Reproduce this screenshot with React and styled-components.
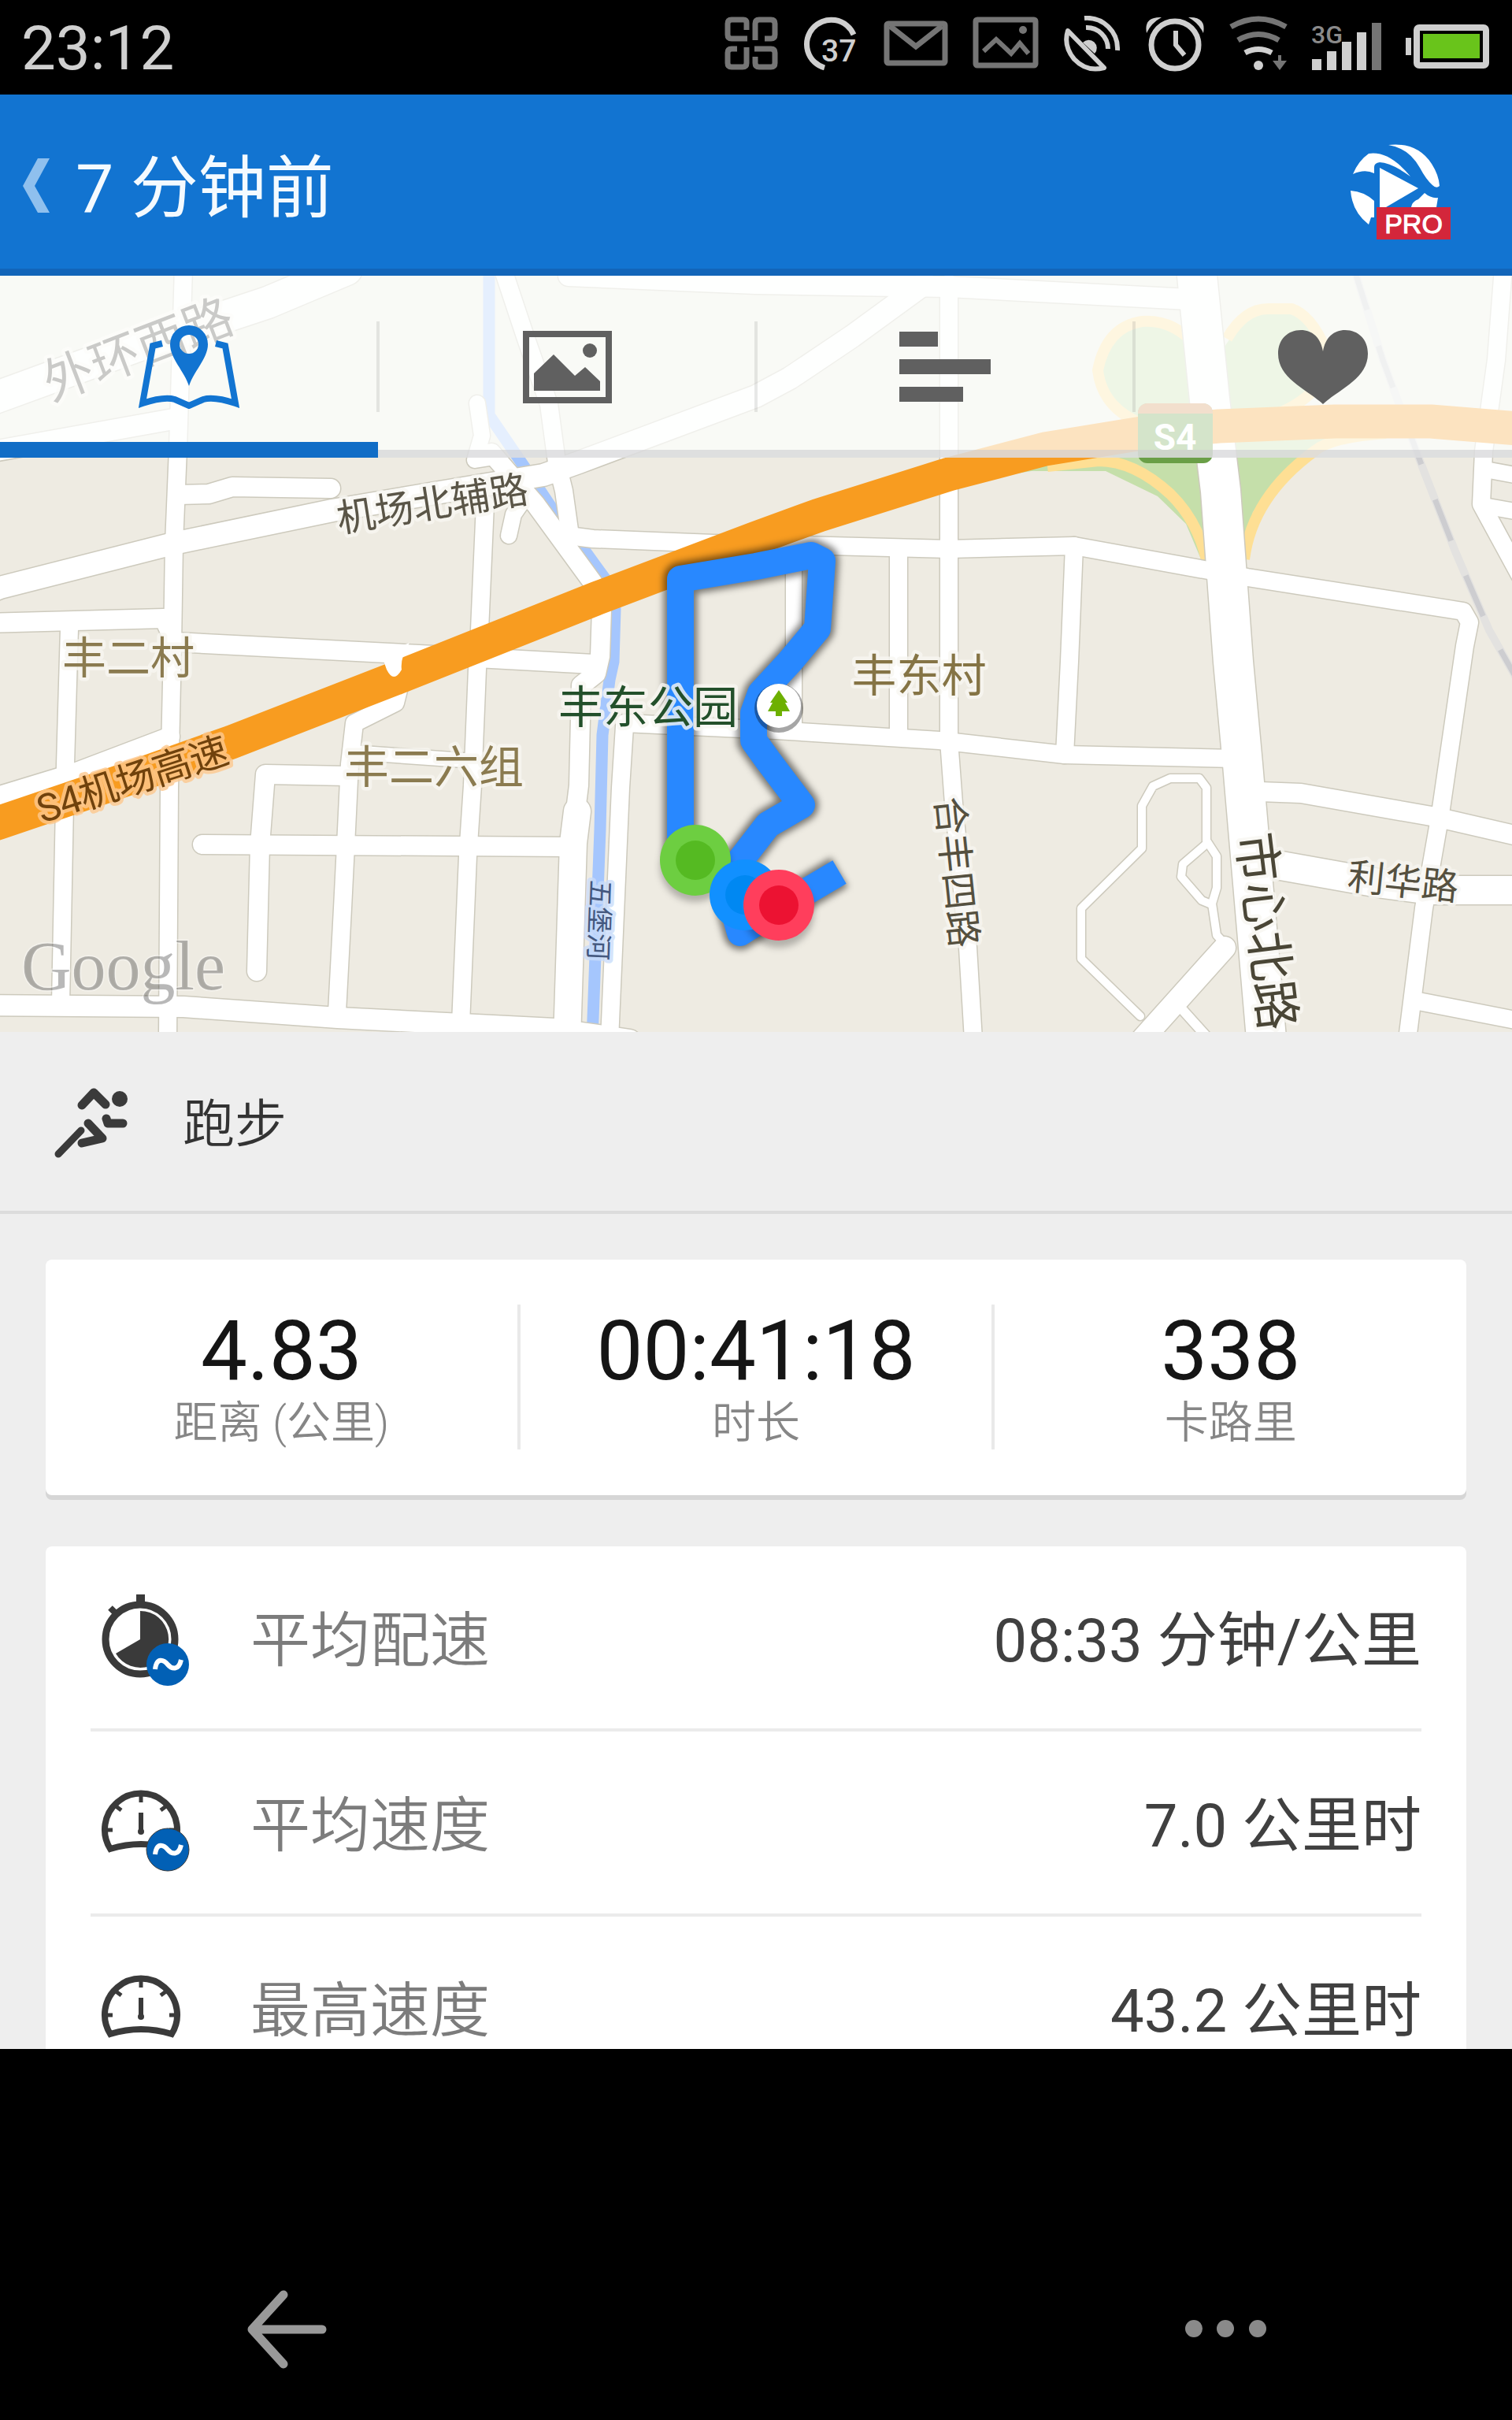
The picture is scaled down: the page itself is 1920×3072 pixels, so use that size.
import React, { useState } from 'react';
import styled, { createGlobalStyle } from 'styled-components';

const GlobalStyle = createGlobalStyle`
    * {
        box-sizing: border-box;
    }
    body {
        margin: 0;
        background: #000;
        font-family: Roboto, "Noto Sans CJK SC", sans-serif;
        color: #333;
    }
    button {
        border: none;
        background: none;
        padding: 0;
        font: inherit;
        color: inherit;
        cursor: pointer;
    }
    svg {
        display: block;
        flex: none;
    }
`

const Screen = styled.div`
    display: flex;
    flex-direction: column;
    height: 100vh;
`

const StatusBar = styled.div`
    display: flex;
    flex: none;
    align-items: center;
    justify-content: space-between;
    height: 120px;
    padding: 0 29px 8px 27px;
    background: #000;
    color: #d0d0d0;
`
const Clock = styled.time`
    font-size: 78px;
    line-height: 104px;
    padding-top: 12px;
`
const StatusIcons = styled.div`
    display: flex;
    align-items: center;
    gap: 31px;
`

const Header = styled.header`
    display: flex;
    flex: none;
    align-items: center;
    justify-content: space-between;
    height: 230px;
    padding: 10px 76px 0 28px;
    background: #1274d1;
    border-bottom: 9px solid #1265b9;
`
const BackLink = styled.button`
    display: flex;
    align-items: center;
    gap: 32px;
    color: #f4faff;
`
const Title = styled.h1`
    margin: 0;
    padding-top: 8px;
    font-size: 86px;
    font-weight: 400;
    line-height: 112px;
`

const Main = styled.main`
    flex: 1;
    min-height: 0;
    overflow: hidden;
    background: #eee;
`
const MapPanel = styled.section`
    position: relative;
    overflow: hidden;
    background: #eeebe2;
`
const MapSvg = styled.svg`
    width: 100%;
    height: auto;
`
const Tabs = styled.nav`
    position: absolute;
    top: 0;
    left: 0;
    right: 0;
    display: flex;
    height: 231px;
    background: rgba(254, 255, 254, 0.72);
`
const Tab = styled.button`
    display: flex;
    flex: 1;
    align-items: center;
    justify-content: center;
    color: ${props => props.$active ? '#1274d1' : '#606060'};
    box-shadow: inset 0 ${props => props.$active ? '-20px #116dc6' : '-10px rgba(200, 200, 204, 0.55)'};
`
const TabDivider = styled.span`
    width: 4px;
    height: 115px;
    margin: 58px -2px 0;
    background: rgba(120, 120, 120, 0.17);
`

const Activity = styled.section`
    display: flex;
    align-items: center;
    gap: 64px;
    height: 231px;
    padding: 0 66px;
    border-bottom: 4px solid #dcdcdc;
`
const ActivityName = styled.h2`
    margin: 0;
    padding-top: 8px;
    font-size: 66px;
    font-weight: 350;
    line-height: 88px;
`

const Cards = styled.div`
    display: flex;
    flex-direction: column;
    gap: 65px;
    padding: 58px;
`
const Card = styled.section`
    background: #fff;
    border-radius: 8px;
    box-shadow: 0 6px 0 #d6d6d6;
`
const Stats = styled(Card)`
    display: flex;
    padding: 57px 0 58px;
`
const Stat = styled.div`
    display: flex;
    flex: 1;
    flex-direction: column;
    align-items: center;
    height: 184px;
    border-right: 4px solid #e9e9e9;
    &:last-child{
        border-right: none;
    }
`
const StatValue = styled.strong`
    font-size: 105px;
    font-weight: 400;
    line-height: 120px;
    color: #151515;
`
const StatLabel = styled.span`
    font-size: 56px;
    font-weight: 350;
    line-height: 60px;
    color: #868686;
`

const Details = styled(Card)`
    padding: 0 57px;
`
const Row = styled.div`
    display: flex;
    align-items: center;
    gap: 76px;
    height: 235px;
    padding-left: 11px;
    border-bottom: 4px solid #ebebeb;
`
const RowText = styled.span`
    padding-top: 8px;
    font-size: 76px;
    line-height: 100px;
`
const RowLabel = styled(RowText)`
    flex: 1;
    font-weight: 350;
    color: #7c7c7c;
`
const RowValue = styled(RowText)`
    font-weight: 400;
    color: #404040;
`

const BottomNav = styled.nav`
    display: flex;
    flex: none;
    align-items: flex-end;
    justify-content: space-between;
    height: 471px;
    padding: 0 312px 65px;
    background: #000;
`

const roads = [
    { w: 40, d: 'M-20 510L180 437L340 384L440 342' },
    { w: 26, d: 'M-20 575L220 532' },
    { w: 22, d: 'M233 340L226 570L221 690L219 820L215 1000L213 1320' },
    { w: 24, d: 'M226 628L265 627L295 618L420 620' },
    { w: 28, d: 'M-20 754L0 746L220 690L422 648L690 603L735 587L960 503L1003 480L1082 427L1174 360' },
    { w: 22, d: 'M638 340L668 430L697 513L707 587L716 623L724 680' },
    { w: 22, d: 'M722 680L753 684L906 690L1015 692L1205 697L1364 693L1529 723L1584 733L1858 776L1866 790L1860 820L1829 1033L1808 1153L1787 1320' },
    { w: 24, d: 'M624 575L680 640L753 740L764 773L762 833L757 855L738 870L735 997L728 1053' },
    { w: 34, d: 'M733 1030L728 1070L720 1320' },
    { w: 20, d: 'M606 512L612 553L603 584L628 580' },
    { w: 20, d: 'M670 627L652 653L646 680' },
    { w: 22, d: 'M616 640L609 800L606 850L600 997L594 1087L585 1300' },
    { w: 24, d: 'M-20 791L208 785L222 815L551 832L753 843' },
    { w: 22, d: 'M88 798L83 970L77 1275' },
    { w: 24, d: 'M-20 1016L92 982L216 935' },
    { w: 22, d: 'M510 860L502 892L450 918L444 970L440 1053L435 1153L428 1285' },
    { w: 24, d: 'M441 985L337 983L330 1073L326 1233' },
    { w: 18, d: 'M446 955L602 966' },
    { w: 24, d: 'M257 1072L722 1075' },
    { w: 26, d: 'M-20 1276L233 1278L429 1292L704 1306L800 1320' },
    { w: 22, d: 'M793 922L788 1000L774 1320' },
    { w: 22, d: 'M793 918L985 927L1193 940L1352 958L1568 963' },
    { w: 22, d: 'M1205 360L1205 940L1211 1020L1229 1203L1236 1320' },
    { w: 22, d: 'M1141 697L1141 930' },
    { w: 20, d: 'M1008 720L1008 925' },
    { w: 22, d: 'M1364 693L1358 840L1352 958' },
    { w: 26, d: 'M722 350L960 360L1205 364L1510 380' },
    { w: 24, d: 'M1600 1005L1652 1007L1823 1037L1940 1064' },
    { w: 36, d: 'M1610 1096L1756 1122L1817 1130L1940 1130' },
    { w: 22, d: 'M1796 1270L1940 1298' },
    { w: 22, d: 'M1909 340L1900 457L1884 573L1881 640L1930 730' },
    { w: 20, d: 'M1886 596L1940 606' },
    { w: 20, d: 'M1884 642L1940 652' },
    { w: 10, d: 'M1557 1200L1545 1187L1539 1147L1545 1127L1545 1087L1532 1067L1532 1000L1523 988L1486 988L1464 998L1450 1023L1450 1077L1373 1153L1373 1217L1448 1290' },
    { w: 10, d: 'M1531 1072L1502 1097L1500 1113L1526 1143L1538 1148' },
    { w: 28, d: 'M1555 1203L1450 1320' },
    { w: 12, d: 'M1500 1280L1536 1320' },
    { w: 50, d: 'M1519 340L1536 507L1550 623L1566 840L1578 970L1609 1330' },
];

const river = 'M621 340V527L664 590L704 650L741 697L770 737L781 773L779 840L774 863L765 933L762 1053L752 1320';
const highway = 'M-20 1050L0 1044L150 993L294 942L505 860L759 759L960 683L1040 654L1205 602L1327 570L1450 550L1548 541L1695 535L1817 535L1940 545';
const track = 'M864 1085L864 735L960 719L1030 705L1044 712L1038 798L1003 840L966 880L957 905L957 940L975 965L1018 1022L975 1047L934 1100L930 1150L940 1184L1000 1146L1066 1107';

const mapLabels = [
    { text: '外环西路', x: 175, y: 443, size: 63, angle: -21, color: '#45433d' },
    { text: '机场北辅路', x: 549, y: 639, size: 49, angle: -9, color: '#5a5547' },
    { text: '丰二村', x: 163, y: 835, size: 56, angle: 0, color: '#8b7b50' },
    { text: '丰二六组', x: 551, y: 973, size: 57, angle: 0, color: '#8b7b50' },
    { text: '丰东村', x: 1167, y: 857, size: 57, angle: 0, color: '#857445' },
    { text: '丰东公园', x: 823, y: 897, size: 57, angle: 0, color: '#23502b' },
    { text: 'S4机场高速', x: 168, y: 989, size: 49, angle: -18, color: '#70420c', halo: '#fdc88e' },
    { text: '合丰四路', x: 1215, y: 1107, size: 48, angle: 84, color: '#55503f' },
    { text: '市心北路', x: 1609, y: 1182, size: 63, angle: 83, color: '#4a4636' },
    { text: '利华路', x: 1782, y: 1119, size: 47, angle: 6, color: '#55503f' },
    { text: '五堡河', x: 761, y: 1168, size: 34, angle: 92, color: '#44587f', halo: '#c9dcfa' },
];

const RunMap = () => (
    <MapSvg viewBox="0 350 1920 960" role="img" aria-label="地图">
        <defs>
            <filter id="soft" x="-20%" y="-20%" width="140%" height="140%">
                <feGaussianBlur stdDeviation="4" />
            </filter>
        </defs>
        <rect x="0" y="350" width="1920" height="960" fill="#eeebe2" />

        {/* interchange lawns and ramps */}
        <g fill="#c5dfaa">
            <path d="M1525 440L1505 423L1480 412H1450L1419 423L1398 450L1395 473L1407 503L1444 530L1540 545Z" />
            <path d="M1555 440L1584 397L1609 393H1640L1664 410L1682 437L1684 480L1664 507L1621 530L1550 540Z" />
            <path d="M1220 612L1400 560H1545V712L1526 712L1506 665L1470 630L1404 598L1310 598Z" />
            <path d="M1560 552H1725L1670 570L1621 607L1591 650L1580 700H1560Z" />
        </g>
        <g fill="none" stroke="#fedf94" strokeWidth="14">
            <path d="M1520 440Q1490 405 1450 408Q1405 415 1394 470Q1400 520 1455 540" />
            <path d="M1558 430Q1580 392 1610 392H1640Q1665 400 1684 445Q1690 500 1615 528" />
            <path d="M1330 592L1395 585Q1440 585 1486 627Q1520 660 1532 710" />
            <path d="M1760 550Q1690 555 1670 572Q1590 630 1580 710" />
        </g>

        <path d="M1719 340L1756 457L1805 590L1848 700L1891 800L1925 860" fill="none" stroke="#e3e2e0" strokeWidth="10" />
        <path d="M1719 340L1756 457L1805 590L1848 700L1891 800L1925 860" fill="none" stroke="#cdcdd0" strokeWidth="7" strokeDasharray="56 48" />
        <path d={river} fill="none" stroke="#a5c6fd" strokeWidth="15" strokeLinejoin="round" />

        <g fill="none" stroke="#cdcabd" strokeLinecap="round" strokeLinejoin="round">
            {roads.map(road => <path key={road.d} d={road.d} strokeWidth={road.w + 3} />)}
        </g>
        <g fill="none" stroke="#fff" strokeLinecap="round" strokeLinejoin="round">
            {roads.map(road => <path key={road.d} d={road.d} strokeWidth={road.w} />)}
        </g>

        <path d={highway} fill="none" stroke="#f89c20" strokeWidth="43" strokeLinejoin="round" />
        <path d="M520 816Q508 835 510 850Q500 868 491 850L484 830Z" fill="#fff" />

        <path d={track} fill="none" stroke="#000" strokeOpacity="0.5" strokeWidth="43" strokeLinejoin="round" filter="url(#soft)" />
        <path d={track} fill="none" stroke="#2888ff" strokeWidth="34" strokeLinejoin="round" />

        <rect x="1445" y="512" width="95" height="76" rx="12" fill="#6a9f47" />
        <path d="M1445 525V524A12 12 0 0 1 1457 512H1528A12 12 0 0 1 1540 524V525Z" fill="#d48c50" />
        <text x="1492" y="571" fontSize="46" fontWeight="700" textAnchor="middle" fill="#fff">S4</text>

        {mapLabels.map(label => (
            <text
                key={label.text}
                x={label.x}
                y={label.y}
                fontSize={label.size}
                fill={label.color}
                stroke={label.halo || '#f7f6f1'}
                strokeOpacity="0.8"
                strokeWidth="9"
                strokeLinejoin="round"
                paintOrder="stroke"
                textAnchor="middle"
                dy={Math.round(label.size * 0.36)}
                transform={`rotate(${label.angle} ${label.x} ${label.y})`}
            >
                {label.text}
            </text>
        ))}
        <text x="27" y="1256" fontSize="88" fontFamily="'Liberation Serif', serif" fill="#000" fillOpacity="0.28" stroke="#fff" strokeOpacity="0.4" strokeWidth="3" paintOrder="stroke">Google</text>

        <circle cx="989" cy="899" r="31" fill="#000" fillOpacity="0.35" />
        <circle cx="989" cy="896" r="28" fill="#fff" />
        <path d="M989 876L1000 892H997L1003 903H993V909H985V903H975L981 892H978Z" fill="#6db000" />

        <g fill="#000" fillOpacity="0.25" filter="url(#soft)">
            <circle cx="883" cy="1100" r="45" />
            <circle cx="989" cy="1158" r="45" />
        </g>
        <circle cx="883" cy="1092" r="45" fill="#6dce41" />
        <circle cx="883" cy="1092" r="25" fill="#55ba22" />
        <circle cx="946" cy="1136" r="45" fill="#1190ff" />
        <circle cx="946" cy="1136" r="25" fill="#0088f2" />
        <circle cx="989" cy="1149" r="45" fill="#ff3e5c" />
        <circle cx="989" cy="1149" r="25" fill="#ec1232" />
    </MapSvg>
)

const StatusGlyphs = () => (
    <StatusIcons>
        <svg width="69" height="72" fill="none" stroke="#757575" strokeWidth="7">
            <path d="M28 18V9Q28 5 24 5H9Q4 5 4 10V24Q4 29 9 29H29" />
            <path d="M39 31V10Q39 5 44 5H59Q64 5 64 10V24Q64 29 59 29H51" />
            <path d="M16 42H9Q4 42 4 47V60Q4 65 9 65H23Q28 65 28 60V40" />
            <path d="M38 42H59Q64 42 64 47V60Q64 65 59 65H44Q39 65 39 60V52" />
        </svg>
        <svg width="71" height="72" fill="none" stroke="#cfcfcf" strokeWidth="7">
            <path d="M27 66A31 31 0 1 1 64 24" />
            <text x="23" y="58" fontSize="39" fontWeight="500" stroke="none" fill="#cfcfcf">37</text>
        </svg>
        <svg width="82" height="72" fill="none" stroke="#757575" strokeWidth="7">
            <rect x="4" y="10" width="74" height="50" rx="2" />
            <path d="M8 13L41 39L74 13" />
        </svg>
        <svg width="84" height="72" fill="none" stroke="#757575" strokeWidth="7">
            <rect x="4" y="5" width="76" height="58" rx="2" />
            <path d="M14 45L30 30L49 48L60 35L71 48" strokeWidth="6" />
            <circle cx="64" cy="18" r="5" fill="#757575" stroke="none" />
        </svg>
        <svg width="73" height="72" fill="none" stroke="#cfcfcf" strokeWidth="6">
            <path d="M6 19L52 66Q30 72 14 55Q0 38 6 19Z" strokeLinejoin="round" />
            <path d="M25 34A9 9 0 0 1 40 48Z" fill="#cfcfcf" stroke="none" />
            <path d="M29 15A27 27 0 0 1 57 42" />
            <path d="M27 3A39 39 0 0 1 69 44" />
        </svg>
        <svg width="76" height="72" fill="none" stroke="#cfcfcf" strokeWidth="7">
            <circle cx="38" cy="37" r="30" />
            <path d="M39 19V37L50 50" strokeWidth="6" />
            <path d="M2 22Q-2 1 21 2Q8 9 2 22ZM74 22Q78 1 55 2Q68 9 74 22Z" fill="#cfcfcf" stroke="none" />
        </svg>
        <svg width="74" height="72" fill="none" stroke="#757575" strokeWidth="7">
            <path d="M2 14Q37 -6 72 14" />
            <path d="M11 31Q37 16 63 31" />
            <path d="M20 47Q37 38 54 47" stroke="#cfcfcf" />
            <circle cx="37" cy="63" r="6" fill="#cfcfcf" stroke="none" />
            <path d="M64 50V62" strokeWidth="4" />
            <path d="M55 57H73L64 69Z" fill="#757575" stroke="none" />
        </svg>
        <svg width="88" height="72" fill="#cfcfcf">
            <text x="-1" y="35" fontSize="32" fontWeight="500" fill="#8a8a8a">3G</text>
            <rect x="0" y="55" width="12" height="14" />
            <rect x="19" y="45" width="12" height="24" />
            <rect x="38" y="33" width="12" height="36" />
            <rect x="57" y="21" width="12" height="48" />
            <rect x="76" y="9" width="12" height="60" fill="#757575" />
        </svg>
        <svg width="106" height="72">
            <rect x="0" y="28" width="7" height="22" fill="#cfcfcf" />
            <rect x="14" y="15" width="88" height="48" rx="3" fill="none" stroke="#cfcfcf" strokeWidth="8" />
            <rect x="22" y="23" width="72" height="31" fill="#69c41b" />
        </svg>
    </StatusIcons>
)

const ProLogo = () => (
    <svg width="134" height="140" viewBox="1710 166 134 140" fill="#fff">
        <path d="M1763 184Q1800 180 1818 208Q1827 222 1828 236Q1824 240 1819 235Q1811 228 1803 213Q1789 188 1763 184Z" />
        <path d="M1718 221Q1725 204 1738 195Q1764 191 1791 224Q1766 206 1752 206Q1745 207 1745 212V220Q1733 214 1718 221Z" />
        <path d="M1752 213L1801 239L1760 263H1752Z" />
        <path d="M1715 242Q1732 243 1745 255V276H1741L1738 285Q1717 269 1715 242Z" />
        <path d="M1809 245Q1817 252 1826 251L1824 263H1792Q1793 256 1801 253Z" />
        <rect x="1748" y="263" width="94" height="41" fill="#d3263b" />
        <text x="1795" y="296" fontSize="34" fontFamily="'Liberation Sans', sans-serif" stroke="#fff" strokeWidth="1" textAnchor="middle">PRO</text>
    </svg>
)

const MapIcon = () => (
    <svg width="128" height="106" viewBox="0 0 128 106" fill="none" stroke="currentColor" strokeWidth="8">
        <path d="M30 23L18 26L5 99Q32 90 46 94L64 102L82 94Q96 90 123 99L110 26L98 23" />
        <path d="M64 77C58 58 40 42 40 24A24 24 0 0 1 88 24C88 42 70 58 64 77ZM64 12A12 12 0 1 0 64 36A12 12 0 1 0 64 12Z" fill="currentColor" fillRule="evenodd" stroke="none" />
    </svg>
)

const PhotoIcon = () => (
    <svg width="113" height="92" viewBox="0 0 113 92" fill="currentColor">
        <rect x="4" y="4" width="105" height="84" fill="none" stroke="currentColor" strokeWidth="8" />
        <path d="M14 76V54L39 30L66 57L79 46L98 64V76Z" />
        <circle cx="85" cy="25" r="9" />
    </svg>
)

const BarsIcon = () => (
    <svg width="116" height="92" viewBox="0 0 116 92" fill="currentColor">
        <rect x="0" y="1" width="49" height="19" />
        <rect x="0" y="36" width="116" height="19" />
        <rect x="0" y="71" width="81" height="19" />
    </svg>
)

const HeartIcon = () => (
    <svg width="114" height="94" viewBox="0 0 114 94" fill="currentColor">
        <path d="M57 94C38 76 0 62 0 30C0 12 12 0 29 0C43 0 54 9 57 27C60 9 71 0 85 0C102 0 114 12 114 30C114 62 76 76 57 94Z" />
    </svg>
)

const RunnerIcon = () => (
    <svg width="102" height="94" viewBox="66 1378 102 94" fill="none" stroke="#3a3a3a" strokeWidth="11" strokeLinecap="round" strokeLinejoin="round">
        <path d="M104 1404L119 1388L134 1403" />
        <circle cx="152" cy="1396" r="10" fill="#3a3a3a" stroke="none" />
        <path d="M135 1421L137 1427H156" />
        <path d="M112 1427L130 1446L104 1452" />
        <path d="M103 1436L74 1466" strokeWidth="9" />
    </svg>
)

const AverageBadge = () => (
    <>
        <circle cx="87" cy="96" r="27" fill="#0260b5" />
        <path d="M71 102C73 86 82 90 87 96C92 102 101 104 104 90" fill="none" stroke="#fff" strokeWidth="6" />
    </>
)

const StopwatchIcon = () => (
    <svg width="116" height="124" viewBox="0 0 116 124">
        <path d="M47 7H58V18H47Z" fill="#3a3a3a" />
        <path d="M14 24L22 32" stroke="#3a3a3a" strokeWidth="8" />
        <circle cx="52" cy="64" r="44" fill="none" stroke="#3a3a3a" strokeWidth="9" />
        <path d="M52 64V28A36 36 0 1 1 21 82Z" fill="#3a3a3a" />
        <AverageBadge />
    </svg>
)

const GaugeIcon = ({ average }) => (
    <svg width="116" height="124" viewBox="0 0 116 124" fill="none" stroke="#3a3a3a">
        <path d="M14 95A46 46 0 1 1 92 95Q53 83 14 95Z" strokeWidth="8" />
        <path d="M53 24V36M20 40L28 46M86 40L78 46M8 71H17M98 71H89" strokeWidth="5" />
        <path d="M53 49V72" strokeWidth="6" />
        <circle cx="53" cy="73" r="4" fill="#3a3a3a" stroke="none" />
        {average && <AverageBadge />}
    </svg>
)

const tabs = [
    { id: 'map', label: '地图', icon: <MapIcon /> },
    { id: 'photos', label: '照片', icon: <PhotoIcon /> },
    { id: 'splits', label: '分段', icon: <BarsIcon /> },
    { id: 'heart', label: '心率', icon: <HeartIcon /> },
];

const stats = [
    { value: '4.83', label: '距离 (公里)' },
    { value: '00:41:18', label: '时长' },
    { value: '338', label: '卡路里' },
];

const details = [
    { label: '平均配速', value: '08:33 分钟/公里', icon: <StopwatchIcon /> },
    { label: '平均速度', value: '7.0 公里时', icon: <GaugeIcon average /> },
    { label: '最高速度', value: '43.2 公里时', icon: <GaugeIcon /> },
];

function App() {
    const [activeTab, setActiveTab] = useState('map');

    return (
        <Screen>
            <GlobalStyle />
            <StatusBar>
                <Clock>23:12</Clock>
                <StatusGlyphs />
            </StatusBar>
            <Header>
                <BackLink>
                    <svg width="36" height="70" viewBox="0 0 36 70" fill="#8fc0ee">
                        <path d="M20 0H35L16 35L35 69H20L1 35Z" />
                    </svg>
                    <Title>7 分钟前</Title>
                </BackLink>
                <ProLogo />
            </Header>
            <Main>
                <MapPanel>
                    <RunMap />
                    <Tabs>
                        {tabs.map((tab, index) => (
                            <React.Fragment key={tab.id}>
                                {index > 0 && <TabDivider />}
                                <Tab $active={tab.id === activeTab} aria-label={tab.label} onClick={() => setActiveTab(tab.id)}>
                                    {tab.icon}
                                </Tab>
                            </React.Fragment>
                        ))}
                    </Tabs>
                </MapPanel>
                <Activity>
                    <RunnerIcon />
                    <ActivityName>跑步</ActivityName>
                </Activity>
                <Cards>
                    <Stats>
                        {stats.map(item => (
                            <Stat key={item.label}>
                                <StatValue>{item.value}</StatValue>
                                <StatLabel>{item.label}</StatLabel>
                            </Stat>
                        ))}
                    </Stats>
                    <Details>
                        {details.map(item => (
                            <Row key={item.label}>
                                {item.icon}
                                <RowLabel>{item.label}</RowLabel>
                                <RowValue>{item.value}</RowValue>
                            </Row>
                        ))}
                    </Details>
                </Cards>
            </Main>
            <BottomNav>
                <button aria-label="返回">
                    <svg width="104" height="100" viewBox="0 0 104 100" fill="none" stroke="#999" strokeWidth="11" strokeLinecap="round" strokeLinejoin="round">
                        <path d="M48 6L8 50L48 94M8 50H97" />
                    </svg>
                </button>
                <button aria-label="更多">
                    <svg width="104" height="100" viewBox="0 0 104 100" fill="#8a8a8a">
                        <circle cx="12" cy="49" r="11" />
                        <circle cx="52" cy="49" r="11" />
                        <circle cx="93" cy="49" r="11" />
                    </svg>
                </button>
            </BottomNav>
        </Screen>
    )
}

export default App;
